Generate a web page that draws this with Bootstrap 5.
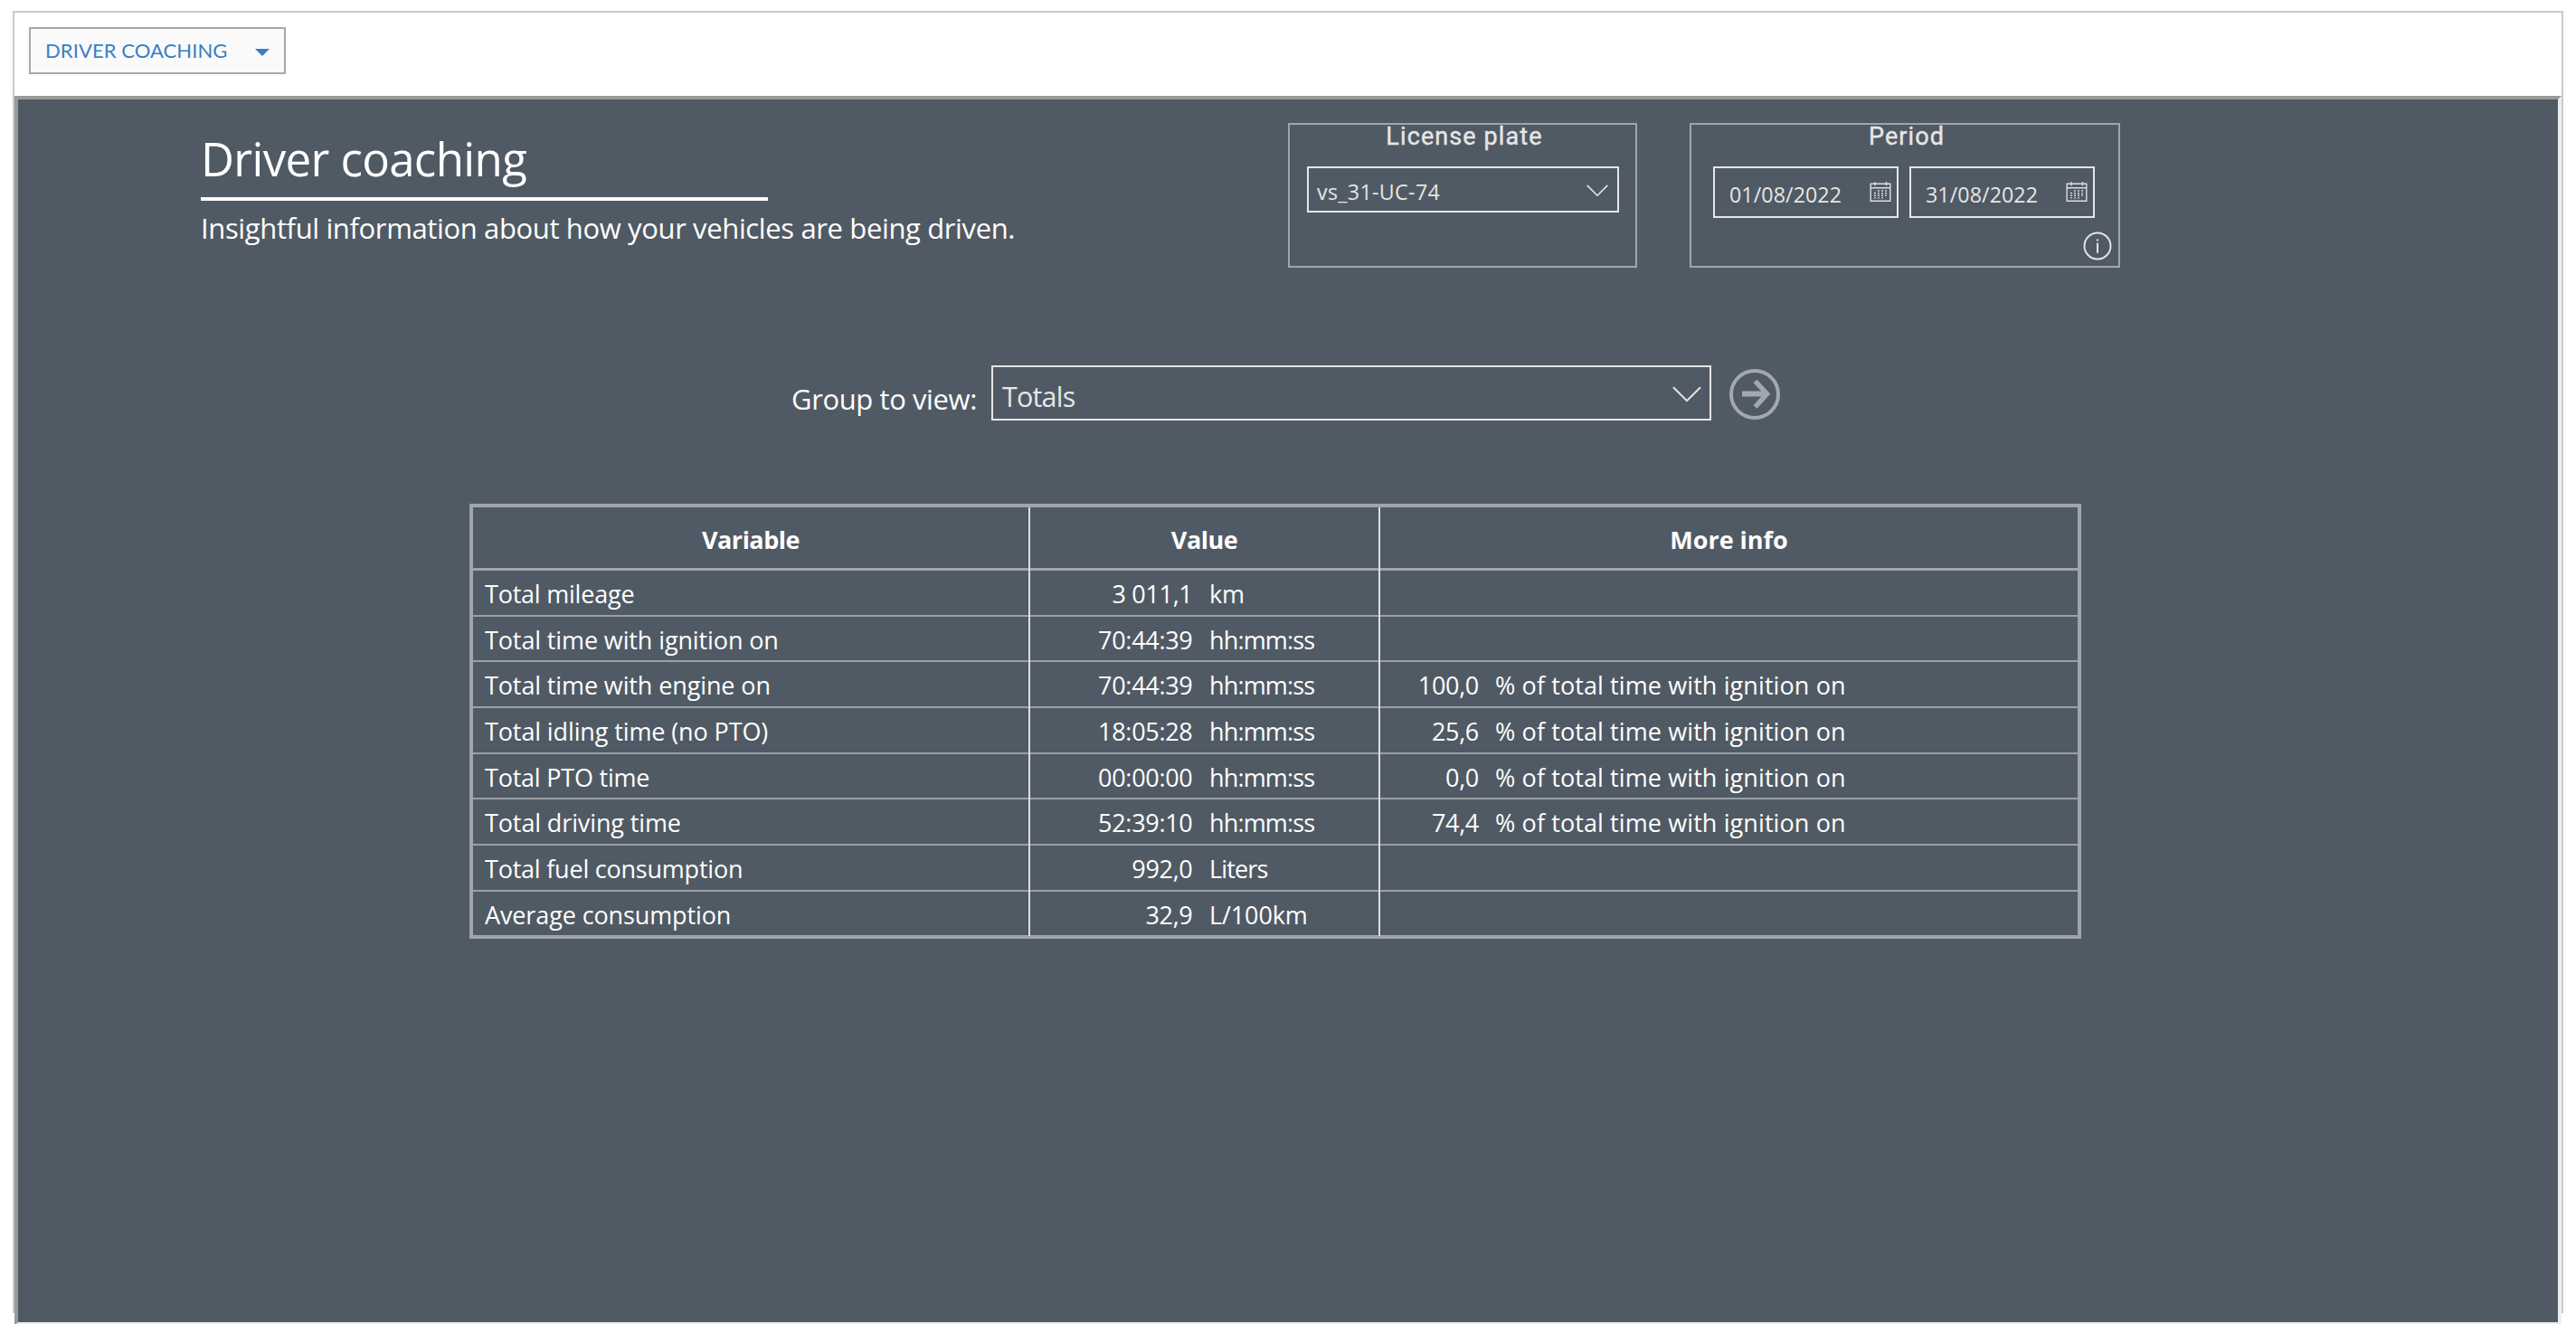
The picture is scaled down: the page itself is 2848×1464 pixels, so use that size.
<!DOCTYPE html>
<html lang="en">
<head>
<meta charset="utf-8">
<title>Driver coaching</title>
<link href="https://cdn.jsdelivr.net/npm/bootstrap@5.3.0/dist/css/bootstrap.min.css" rel="stylesheet">
<style>
body{width:2848px;height:1464px;overflow:hidden;background:#fff;font-family:"Open Sans","Noto Sans",sans-serif;color:#fff}
/* outer frame ends above the page bottom; the report inside runs past it */
.shell{margin:12px 14px 0;height:1440px;border:2px solid #c9c9cf;border-bottom:0}
.toolbar{height:92px;padding:16px 16px 0}
.btn-view{width:284px;height:52px;border:2px solid #a3a8b1;border-radius:0;background:#fafafa;color:#397ec6;font:22px/46px Lato,sans-serif;letter-spacing:.08px;padding:0 16px 0 16px}
.btn-view:hover{color:#397ec6}
.caret{margin-top:4px}
.report{height:1360px;border:4px solid;border-color:#999 #eee #eee #999;background:#505a64}
.report-head{padding:26px 0 0 202px;height:186px}
.title-block{width:1202px;padding-top:4px}
.title-block h1{font-size:51px;line-height:70px;letter-spacing:-.65px;margin:0;font-weight:400}
.rule{width:627px;height:4px;background:#fff;margin:8px 0}
.sub{font-size:31px;line-height:44px;letter-spacing:-.37px;white-space:nowrap;margin:0}
.slicer{height:160px;border:2px solid #a0a5ab;color:#e6e6e6}
.slicer h2{font:400 27px/28px Roboto,sans-serif;-webkit-text-stroke:.4px #e6e6e6;letter-spacing:1.1px;margin:-1px 0 0;padding-left:4px;height:31px;text-align:center}
.plate{width:386px;margin-right:58px}
.period{width:476px}
.field{border:2px solid #e6e6e6;color:#e6e6e6;white-space:nowrap}
.f-plate{width:345px;height:51px;margin:16px 0 0 19px;padding:0 10px 0 9px;font-size:23.2px;line-height:53px;letter-spacing:.35px}
.f-plate svg{margin-top:18px}
.f-date{width:205px;height:57px;padding:0 6px 0 16px;font-size:23.2px;line-height:58px;letter-spacing:.1px}
.f-date svg{margin-top:14px}
.dates{margin:16px 0 0 24px;gap:12px}
.info{margin:15px 7px 0 0}
.group-row{margin-top:108px;height:61px;padding-left:855px}
.group-row label{font-size:31px;line-height:74px;letter-spacing:-.4px;width:221px}
.f-group{width:796px;height:61px;padding:0 9px 0 10px;font-size:30.5px;line-height:64px;letter-spacing:-.8px;margin-right:20px}
.f-group svg{margin-top:21px}
.go{margin-top:4px}
.grid{margin:92px 0 0 499px;width:1782px;height:481px;border:4px solid #a0a5ab;font-size:27px;letter-spacing:-.12px;white-space:nowrap}
.g-row{height:50.66px;box-shadow:inset 0 -2px #9aa0a7;line-height:51px}
.g-row:last-child{height:49px;box-shadow:none}
.g-head{height:70px;box-shadow:inset 0 -3px #a0a5ab;font-weight:700;line-height:71px;letter-spacing:-.5px;text-align:center}
.g-head .c3{letter-spacing:0}
.c1,.c2{border-right:2px solid #dcdedf}
.c1{width:616px}.c2{width:387px}.c3{width:771px}
.g-row:not(.g-head) .c1{padding-left:13px}
.num{text-align:right;letter-spacing:-.3px}
.c2 .num{width:179.5px;margin-right:18.5px}
.c3 .num{width:109px;margin-right:18px}
.c3{letter-spacing:.1px}
.hms{letter-spacing:-.85px}
.tight{letter-spacing:-.22px}
</style>
<script src="https://cdn.jsdelivr.net/npm/bootstrap@5.3.0/dist/js/bootstrap.bundle.min.js"></script>
</head>
<body>
<svg class="d-none"><symbol id="cal" viewBox="0 0 24 24"><g fill="none" stroke="#dcdedf" stroke-width="1.4"><path d="M1.2 3.2h21.6v19H1.2zM1.2 7.7h21.6"/><path d="M6 1v4.5M18.5 1v4.5" stroke-width="1.3"/><path d="M9.9 10.2v9.4M14 10.2v9.4M18 10.2v6.6M5.9 12.8v6.8" stroke-width="1.9" stroke-dasharray="1.5 1.2"/></g></symbol></svg>
<div class="shell">
<div class="toolbar">
<button class="btn btn-view d-flex align-items-center justify-content-between"><span>DRIVER COACHING</span>
<svg class="caret" width="16" height="8"><path d="M0 0h16L8 8z" fill="#397ec6"/></svg></button>
</div>
<main class="report">
<header class="report-head d-flex">
<div class="title-block"><h1>Driver coaching</h1><div class="rule"></div><p class="sub">Insightful information about how your vehicles are being driven.</p></div>
<section class="slicer plate"><h2>License plate</h2>
<div class="field f-plate d-flex justify-content-between"><span>vs_31-UC-74</span>
<svg width="24" height="14"><path d="M.7.9 12 12.2 23.3.9" fill="none" stroke="#e6e6e6" stroke-width="1.6"/></svg></div></section>
<section class="slicer period"><h2>Period</h2>
<div class="dates d-flex">
<div class="field f-date d-flex justify-content-between"><span>01/08/2022</span><svg width="24" height="24"><use href="#cal"/></svg></div>
<div class="field f-date d-flex justify-content-between"><span>31/08/2022</span><svg width="24" height="24"><use href="#cal"/></svg></div>
</div>
<div class="d-flex justify-content-end"><svg class="info" width="32" height="32"><circle cx="16" cy="16" r="14.5" fill="none" stroke="#e6e6e6" stroke-width="1.9"/><path d="M16 12.8v11M16 8.6v2" stroke="#e6e6e6" stroke-width="2"/></svg></div>
</section>
</header>
<div class="group-row d-flex"><label>Group to view:</label>
<div class="field f-group d-flex justify-content-between"><span>Totals</span><svg width="32" height="18"><path d="M1 1.2 16 16.2 31 1.2" fill="none" stroke="#e6e6e6" stroke-width="2"/></svg></div>
<svg class="go" width="56" height="56" fill="none" stroke="#a3a8b0"><circle cx="28" cy="28" r="26" stroke-width="4"/><path d="M14 27.5h27" stroke-width="6"/><path d="M28.5 13.5 41.5 27.5 28.5 42" stroke-width="5.5"/></svg>
</div>
<div class="grid">
<div class="g-row g-head d-flex"><div class="c1">Variable</div><div class="c2">Value</div><div class="c3">More info</div></div>
<div class="g-row d-flex"><div class="c1 tight">Total mileage</div><div class="c2 d-flex"><div class="num">3 011,1</div><span>km</span></div><div class="c3"></div></div>
<div class="g-row d-flex"><div class="c1">Total time with ignition on</div><div class="c2 d-flex"><div class="num">70:44:39</div><span class="hms">hh:mm:ss</span></div><div class="c3"></div></div>
<div class="g-row d-flex"><div class="c1">Total time with engine on</div><div class="c2 d-flex"><div class="num">70:44:39</div><span class="hms">hh:mm:ss</span></div><div class="c3 d-flex"><div class="num">100,0</div><span>% of total time with ignition on</span></div></div>
<div class="g-row d-flex"><div class="c1">Total idling time (no PTO)</div><div class="c2 d-flex"><div class="num">18:05:28</div><span class="hms">hh:mm:ss</span></div><div class="c3 d-flex"><div class="num">25,6</div><span>% of total time with ignition on</span></div></div>
<div class="g-row d-flex"><div class="c1 tight">Total PTO time</div><div class="c2 d-flex"><div class="num">00:00:00</div><span class="hms">hh:mm:ss</span></div><div class="c3 d-flex"><div class="num">0,0</div><span>% of total time with ignition on</span></div></div>
<div class="g-row d-flex"><div class="c1">Total driving time</div><div class="c2 d-flex"><div class="num">52:39:10</div><span class="hms">hh:mm:ss</span></div><div class="c3 d-flex"><div class="num">74,4</div><span>% of total time with ignition on</span></div></div>
<div class="g-row d-flex"><div class="c1 tight">Total fuel consumption</div><div class="c2 d-flex"><div class="num">992,0</div><span class="hms">Liters</span></div><div class="c3"></div></div>
<div class="g-row d-flex"><div class="c1">Average consumption</div><div class="c2 d-flex"><div class="num">32,9</div><span>L/100km</span></div><div class="c3"></div></div>
</div>
</main>
</div>
</body>
</html>
